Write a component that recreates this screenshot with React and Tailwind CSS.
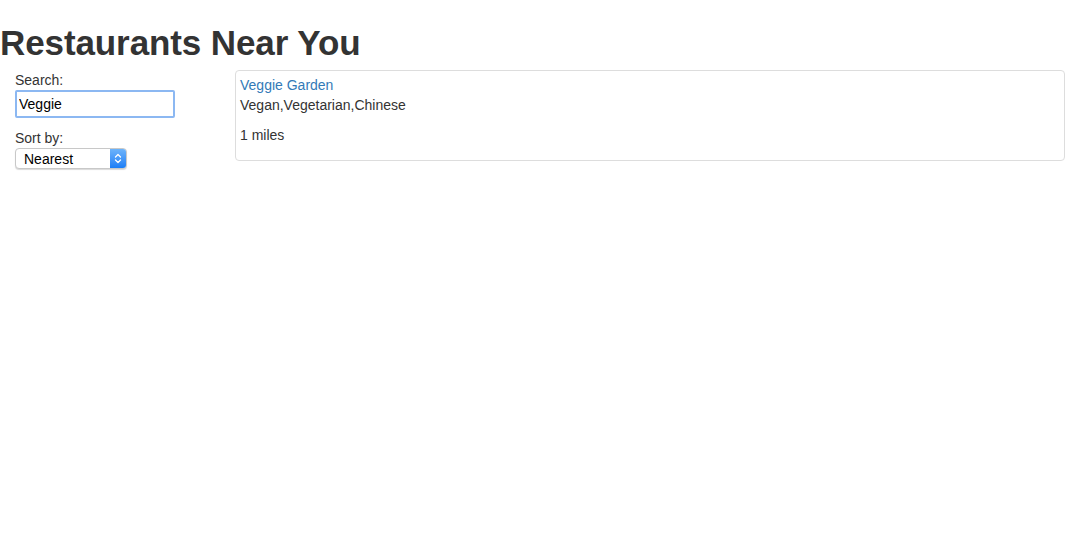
import React, { useState } from 'react';

export default function App() {
    const [search, setSearch] = useState('Veggie');
    const [sort, setSort] = useState('Nearest');

    return (
        <div className="min-h-screen bg-white text-[#333] text-[14px] leading-[20px]" style={{ fontFamily: '"Liberation Sans", Arial, sans-serif' }}>
            <h1 className="pt-[23px] text-[35px] leading-[40px] font-bold tracking-[-0.1px] text-[#333]">Restaurants Near You</h1>
            <div className="flex pt-[7px]">
                <div className="w-[220px] shrink-0 pl-[15px]">
                    <label className="block leading-[20px]">Search:</label>
                    <input
                        type="text"
                        value={search}
                        onChange={e => setSearch(e.target.value)}
                        className="block w-[160px] h-[28px] px-[2px] border-2 border-[#8cb8f2] rounded-[2px] text-[14px] text-black outline-none"
                    />
                    <label className="block mt-[10px] leading-[20px]">Sort by:</label>
                    <div className="relative w-[112px] h-[21px] rounded-[4px] border border-[#c8c8c8] bg-white shadow-[0_1px_1px_rgba(0,0,0,0.15)] overflow-hidden">
                        <select
                            value={sort}
                            onChange={e => setSort(e.target.value)}
                            className="appearance-none w-full h-full pl-[8px] pr-[20px] text-[14px] text-black bg-transparent outline-none leading-[19px]"
                        >
                            <option>Nearest</option>
                            <option>Name</option>
                        </select>
                        <div className="pointer-events-none absolute right-0 top-0 h-full w-[16px] bg-gradient-to-b from-[#6cb3fa] to-[#1a7ef6] flex items-center justify-center">
                            <svg width="8" height="13" viewBox="0 0 8 13" fill="none" stroke="white" strokeWidth="1.3" strokeLinecap="round" strokeLinejoin="round">
                                <path d="M1.5 5 L4 2.5 L6.5 5" />
                                <path d="M1.5 8 L4 10.5 L6.5 8" />
                            </svg>
                        </div>
                    </div>
                </div>
                <div className="flex-1 pl-[15px] pr-[15px]">
                    <div className="border border-[#ddd] rounded-[4px] px-[4px] pt-[4px] pb-[15px]">
                        <a href="#" className="block text-[#337ab7]">Veggie Garden</a>
                        <div>Vegan,Vegetarian,Chinese</div>
                        <p className="mt-[10px]">1 miles</p>
                    </div>
                </div>
            </div>
        </div>
    );
}
